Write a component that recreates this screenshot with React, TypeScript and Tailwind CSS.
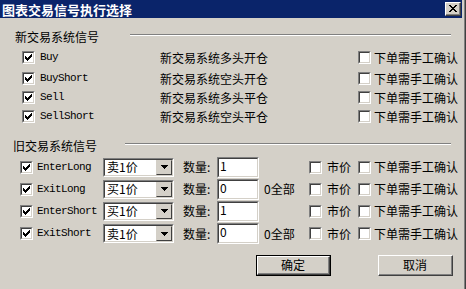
import React from 'react';

const cjk = { fontFamily: '"Noto Sans CJK SC", sans-serif' };
const mono = { fontFamily: '"Liberation Mono", monospace', letterSpacing: '-0.6px' };

function Check({ checked }: { checked?: boolean }) {
  return (
    <span className="flex h-[13px] w-[13px] shrink-0 border-t border-l border-b border-r border-t-[#808080] border-l-[#808080] border-b-white border-r-white">
      <span className="flex flex-1 items-center justify-center border-t border-l border-b border-r border-t-[#404040] border-l-[#404040] border-b-[#d4d0c8] border-r-[#d4d0c8] bg-white">
        {checked && (
          <svg width="7" height="7" viewBox="0 0 7 7" shapeRendering="crispEdges">
            {[2, 3, 4, 3, 2, 1, 0].map((y, x) => (
              <rect key={x} x={x} y={y} width="1" height="3" fill="#000" />
            ))}
          </svg>
        )}
      </span>
    </span>
  );
}

function Sunken({ className, children }: { className: string; children?: React.ReactNode }) {
  return (
    <div className={`flex shrink-0 border-t border-l border-b border-r border-t-[#808080] border-l-[#808080] border-b-white border-r-white ${className}`}>
      <div className="flex flex-1 items-center border-t border-l border-b border-r border-t-[#404040] border-l-[#404040] border-b-[#d4d0c8] border-r-[#d4d0c8] bg-white">
        {children}
      </div>
    </div>
  );
}

function Combo({ value }: { value: string }) {
  return (
    <Sunken className="h-[19px] w-[71px]">
      <span className="flex-1 pl-[2px] text-[12px] leading-[12px] text-black" style={cjk}>{value}</span>
      <span className="flex h-full w-[16px] items-center justify-center border-t border-l border-b border-r border-t-[#d4d0c8] border-l-[#d4d0c8] border-b-[#404040] border-r-[#404040] bg-[#d4d0c8]">
        <svg width="7" height="4" viewBox="0 0 7 4" shapeRendering="crispEdges">
          <rect x="0" y="0" width="7" height="1" fill="#000" />
          <rect x="1" y="1" width="5" height="1" fill="#000" />
          <rect x="2" y="2" width="3" height="1" fill="#000" />
          <rect x="3" y="3" width="1" height="1" fill="#000" />
        </svg>
      </span>
    </Sunken>
  );
}

function GroupHeader({ title, x, lineGap }: { title: string; x: number; lineGap: number }) {
  return (
    <div className="flex h-[12px] items-start">
      <span className="text-[12px] leading-[12px] text-black" style={{ ...cjk, marginLeft: x }}>{title}</span>
      <div className="mt-[3px] mr-[11px] flex flex-1 flex-col" style={{ marginLeft: lineGap }}>
        <div className="h-px bg-[#808080]" />
        <div className="h-px bg-white" />
      </div>
    </div>
  );
}

const newRows = [
  { name: 'Buy', desc: '新交易系统多头开仓', mt: 'mt-[8px]' },
  { name: 'BuyShort', desc: '新交易系统空头开仓', mt: 'mt-[8px]' },
  { name: 'Sell', desc: '新交易系统多头平仓', mt: 'mt-[6px]' },
  { name: 'SellShort', desc: '新交易系统空头平仓', mt: 'mt-[6px]' },
];

const oldRows = [
  { name: 'EnterLong', price: '卖1价', qty: '1', all: false, h: 'h-[22px]' },
  { name: 'ExitLong', price: '买1价', qty: '0', all: true, h: 'h-[22px]' },
  { name: 'EnterShort', price: '买1价', qty: '1', all: false, h: 'h-[22px]' },
  { name: 'ExitShort', price: '卖1价', qty: '0', all: true, h: 'h-[23px]' },
];

function Button({ label, primary }: { label: string; primary?: boolean }) {
  const inner = (
    <div className="flex flex-1 border-t border-l border-b border-r border-t-white border-l-white border-b-[#404040] border-r-[#404040]">
      <div className="flex flex-1 items-center justify-center border-b border-r border-b-[#808080] border-r-[#808080] text-[12px] leading-[12px] text-black" style={cjk}>
        {label}
      </div>
    </div>
  );
  return (
    <div className={`flex h-[21px] w-[75px] ${primary ? 'border border-black' : ''}`}>{inner}</div>
  );
}

export default function App() {
  return (
    <div className="flex h-[289px] w-[466px] overflow-hidden bg-[#d4d0c8] text-black">
      <div className="flex w-[462px] flex-col">
        <div className="flex h-[18px] items-center bg-[#0a246a] pl-[2px] pr-[1px]">
          <span className="text-[13px] font-bold leading-[13px] text-white" style={cjk}>图表交易信号执行选择</span>
          <div className="ml-auto flex h-[14px] w-[16px] border-t border-l border-b border-r border-t-white border-l-white border-b-[#404040] border-r-[#404040] bg-[#d4d0c8]">
            <div className="flex flex-1 items-center justify-center border-b border-r border-b-[#808080] border-r-[#808080]">
              <svg width="8" height="7" viewBox="0 0 8 7" shapeRendering="crispEdges">
                <path d="M0 0h2v1h-2zM6 0h2v1h-2zM1 1h2v1h-2zM5 1h2v1h-2zM2 2h4v1h-4zM3 3h2v1h-2zM2 4h4v1h-4zM1 5h2v1h-2zM5 5h2v1h-2zM0 6h2v1h-2zM6 6h2v1h-2z" fill="#000" />
              </svg>
            </div>
          </div>
        </div>

        <div className="mt-[13px]">
          <GroupHeader title="新交易系统信号" x={15} lineGap={31} />
        </div>
        {newRows.map((r) => (
          <div key={r.name} className={`flex h-[13px] items-center pl-[22px] ${r.mt}`}>
            <Check checked />
            <span className="ml-[5px] w-[120px] text-[11px] leading-[11px]" style={mono}>{r.name}</span>
            <span className="w-[198px] text-[12px] leading-[12px]" style={cjk}>{r.desc}</span>
            <Check />
            <span className="ml-[3px] text-[12px] leading-[12px]" style={cjk}>下单需手工确认</span>
          </div>
        ))}

        <div className="mt-[17px]">
          <GroupHeader title="旧交易系统信号" x={13} lineGap={28} />
        </div>
        <div className="mt-[4px] flex flex-col">
          {oldRows.map((r) => (
            <div key={r.name} className={`flex items-center pl-[20px] ${r.h}`}>
              <Check checked />
              <span className="ml-[4px] w-[66px] text-[11px] leading-[11px]" style={mono}>{r.name}</span>
              <Combo value={r.price} />
              <span className="ml-[9px] w-[34px] text-[12px] leading-[12px]" style={cjk}>数量:</span>
              <Sunken className="h-[21px] w-[42px]">
                <span className="self-start pl-[1px] text-[12px] leading-[14px]" style={cjk}>{r.qty}</span>
              </Sunken>
              <span className="ml-[5px] w-[45px] text-[12px] leading-[12px]" style={cjk}>{r.all ? '0全部' : ''}</span>
              <Check />
              <span className="ml-[5px] w-[31px] text-[12px] leading-[12px]" style={cjk}>市价</span>
              <Check />
              <span className="ml-[3px] text-[12px] leading-[12px]" style={cjk}>下单需手工确认</span>
            </div>
          ))}
        </div>

        <div className="mt-[10px] flex">
          <div className="ml-[256px]">
            <Button label="确定" primary />
          </div>
          <div className="ml-[47px]">
            <Button label="取消" />
          </div>
        </div>
      </div>
      <div className="w-[2px] bg-[#d4d0c8]" />
      <div className="w-px bg-[#808080]" />
      <div className="w-px bg-[#404040]" />
    </div>
  );
}
